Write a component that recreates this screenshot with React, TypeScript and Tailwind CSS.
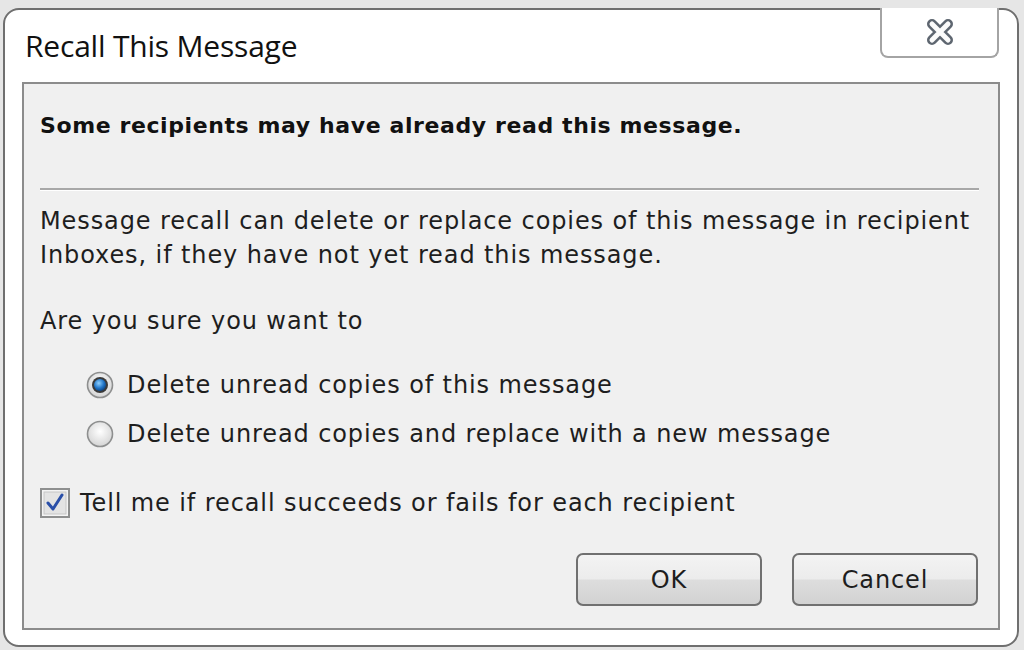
import React from 'react'

const body = "font-['DejaVu_Sans',sans-serif] text-[24px] tracking-[0.9px] text-[#1e1e1e]"

const Radio = ({ checked }: { checked?: boolean }) => (
  <svg width="28" height="28" viewBox="0 0 28 28">
    <defs>
      <radialGradient id="rbg" cx="50%" cy="40%" r="60%">
        <stop offset="0%" stopColor="#ffffff" />
        <stop offset="100%" stopColor="#d4d4d4" />
      </radialGradient>
      <radialGradient id="rdot" cx="40%" cy="35%" r="70%">
        <stop offset="0%" stopColor="#8fd0ff" />
        <stop offset="60%" stopColor="#1f74c7" />
        <stop offset="100%" stopColor="#0d3f7a" />
      </radialGradient>
    </defs>
    <circle cx="14" cy="14" r="12.5" fill="url(#rbg)" stroke="#8e8f8f" strokeWidth="1.6" />
    {checked && (
      <>
        <circle cx="14" cy="14" r="8" fill="#3a3a3a" />
        <circle cx="14" cy="14" r="6" fill="url(#rdot)" />
      </>
    )}
  </svg>
)

const Check = () => (
  <svg width="30" height="30" viewBox="0 0 30 30">
    <rect x="1" y="1" width="28" height="28" fill="#f4f4f4" stroke="#8e8f8f" strokeWidth="2" />
    <rect x="4" y="4" width="22" height="22" fill="#e3e3e3" stroke="#c6c6c6" strokeWidth="1" />
    <path d="M8 15 L13 21 L22 7" fill="none" stroke="#2a4fa8" strokeWidth="3" strokeLinecap="round" strokeLinejoin="round" />
  </svg>
)

const Button = ({ label }: { label: string }) => (
  <button className="w-[186px] h-[53px] rounded-[7px] border-2 border-[#707070] bg-[linear-gradient(#f3f3f3_0%,#ececec_48%,#dddddd_52%,#d2d2d2_100%)] flex items-center justify-center">
    <span className={body}>{label}</span>
  </button>
)

export default function App() {
  return (
    <div className="w-[1024px] h-[650px] bg-[#e6e6e6] pt-[8px] pl-[3px] pr-[5px] pb-[3px]">
      <div className="relative h-full rounded-[16px] border-2 border-[#6f6f6f] bg-white flex flex-col">
        <div className="h-[72px] flex items-center pl-[20px] pb-[2px]">
          <span className="font-['Open_Sans',sans-serif] text-[30px] tracking-[-0.2px] text-[#111]">
            Recall This Message
          </span>
        </div>
        <div className="absolute top-[-2px] right-[18px] w-[119px] h-[50px] rounded-b-[8px] border-2 border-t-0 border-[#a4a4a4] bg-white flex items-center justify-center">
          <svg width="34" height="28" viewBox="0 0 34 28">
            <path d="M9 6 L25 22 M25 6 L9 22" stroke="#5e6670" strokeWidth="10" strokeLinecap="round" />
            <path d="M9 6 L25 22 M25 6 L9 22" stroke="#fbfbfb" strokeWidth="5" strokeLinecap="round" />
          </svg>
        </div>
        <div className="flex-1 mx-[17px] mb-[15px] border-2 border-[#8c8c8c] bg-[#f0f0f0] flex flex-col pl-[16px] pr-[19px]">
          <div className="mt-[24px] h-[34px] flex items-center font-['DejaVu_Sans',sans-serif] text-[22px] tracking-[0.6px] font-bold text-[#111]">
            Some recipients may have already read this message.
          </div>
          <div className="mt-[46px] h-[2px] bg-[#a8a8a8] border-b border-white box-content" />
          <div className={`${body} mt-[13px] leading-[34px] whitespace-nowrap`}>
            Message recall can delete or replace copies of this message in recipient
            <br />
            Inboxes, if they have not yet read this message.
          </div>
          <div className={`${body} mt-[32px] leading-[34px]`}>Are you sure you want to</div>
          <div className="mt-[30px] flex flex-col gap-[15px] pl-[46px]">
            <label className="flex items-center gap-[13px] h-[34px]">
              <Radio checked />
              <span className={body}>Delete unread copies of this message</span>
            </label>
            <label className="flex items-center gap-[13px] h-[34px]">
              <Radio />
              <span className={body}>Delete unread copies and replace with a new message</span>
            </label>
          </div>
          <label className="mt-[35px] flex items-center gap-[10px] h-[34px]">
            <Check />
            <span className={body}>Tell me if recall succeeds or fails for each recipient</span>
          </label>
          <div className="mt-[33px] flex justify-end gap-[30px] pr-[1px]">
            <Button label="OK" />
            <Button label="Cancel" />
          </div>
        </div>
      </div>
    </div>
  )
}
